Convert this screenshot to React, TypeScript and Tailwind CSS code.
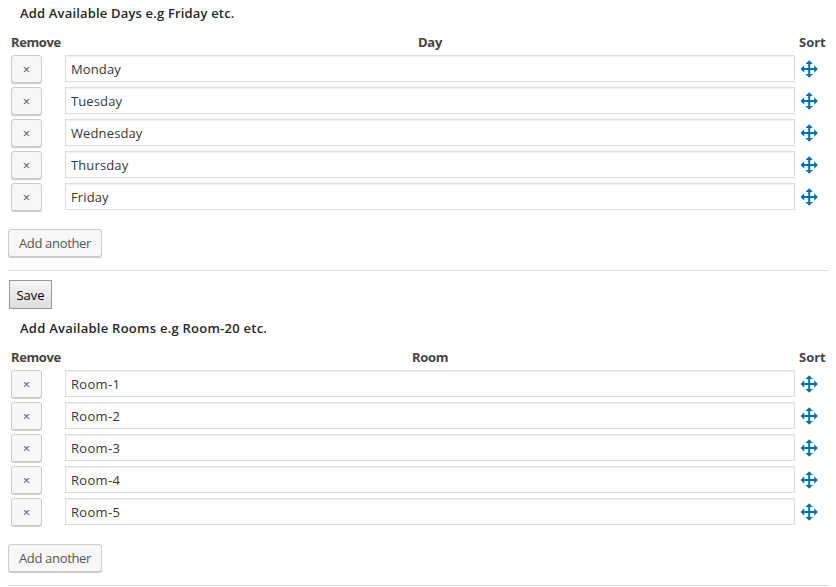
const days = ['Monday', 'Tuesday', 'Wednesday', 'Thursday', 'Friday'];
const rooms = ['Room-1', 'Room-2', 'Room-3', 'Room-4', 'Room-5'];

function MoveIcon() {
  return (
    <svg width="18" height="18" viewBox="0 0 18 18" fill="#0073aa" className="block">
      <path d="M9.2 .3 12.9 4H10.2V8H14.2V5.3L17.9 9 14.2 12.7V10H10.2V14H12.9L9.2 17.7 5.5 14H8.2V10H4.2V12.7L.5 9 4.2 5.3V8H8.2V4H5.5Z" />
    </svg>
  );
}

type SectionProps = {
  title: string;
  column: string;
  items: string[];
  titleClass: string;
  inputClass: string;
  removeClass: string;
};

function Section({ title, column, items, titleClass, inputClass, removeClass }: SectionProps) {
  return (
    <section className="h-[271px] border-b border-[#dddddd]">
      <h2 className={`pl-3 pt-[3px] h-[29px] text-[13px] leading-5 font-semibold text-[#23282d] whitespace-nowrap ${titleClass}`}>{title}</h2>
      <div className="flex h-[26px] pt-[3px] text-[13px] leading-5 font-bold text-[#444444]">
        <span className="w-[57px] shrink-0 pl-[3px] tracking-[-0.4px]">Remove</span>
        <span className="w-[730px] shrink-0 text-center tracking-[-0.3px]">{column}</span>
        <span className="pl-1">Sort</span>
      </div>
      <div className="flex flex-col gap-1">
        {items.map((item) => (
          <div key={item} className="flex h-7 items-start">
            <div className="w-[57px] shrink-0 pl-[3px]">
              <button className={`block h-7 w-[31px] rounded-[3px] border border-[#cccccc] bg-[#f7f7f7] text-center text-[13px] leading-[27px] shadow-[0_1px_0_#cccccc] ${removeClass}`}>×</button>
            </div>
            <input
              defaultValue={item}
              className={`block h-[27px] w-[730px] shrink-0 border border-[#dddddd] bg-white px-[5px] text-[13px] text-[#32373c] shadow-[inset_0_1px_2px_rgba(0,0,0,0.07)] outline-none ${inputClass}`}
            />
            <div className="pl-[5px] pt-[5px]">
              <MoveIcon />
            </div>
          </div>
        ))}
      </div>
      <button className="mt-[18px] block h-7 w-[94px] rounded-[3px] border border-[#cccccc] bg-[#f7f7f7] text-center text-[13px] leading-[26px] tracking-[-0.32px] text-[#555555] shadow-[0_1px_0_#cccccc] whitespace-nowrap">
        Add another
      </button>
    </section>
  );
}

export default function App() {
  return (
    <main className="h-[587px] overflow-hidden bg-white pl-2 pr-[7px] font-['Open_Sans','Noto_Sans',sans-serif]">
      <Section
        title="Add Available Days e.g Friday etc."
        column="Day"
        items={days}
        titleClass="tracking-[0.17px]"
        inputClass="tracking-[0.12px]"
        removeClass="text-[#555555]"
      />
      <div className="h-11 pl-px pt-[9px]">
        <button className="block h-[29px] w-[43px] border border-[#999999] bg-linear-to-b from-[#f6f6f6] to-[#dddddd] text-center text-[13px] leading-[28px] text-black">
          Save
        </button>
      </div>
      <Section
        title="Add Available Rooms e.g Room-20 etc."
        column="Room"
        items={rooms}
        titleClass="tracking-[0.25px]"
        inputClass="tracking-[0.3px]"
        removeClass="text-[#5b4b78]"
      />
    </main>
  );
}
